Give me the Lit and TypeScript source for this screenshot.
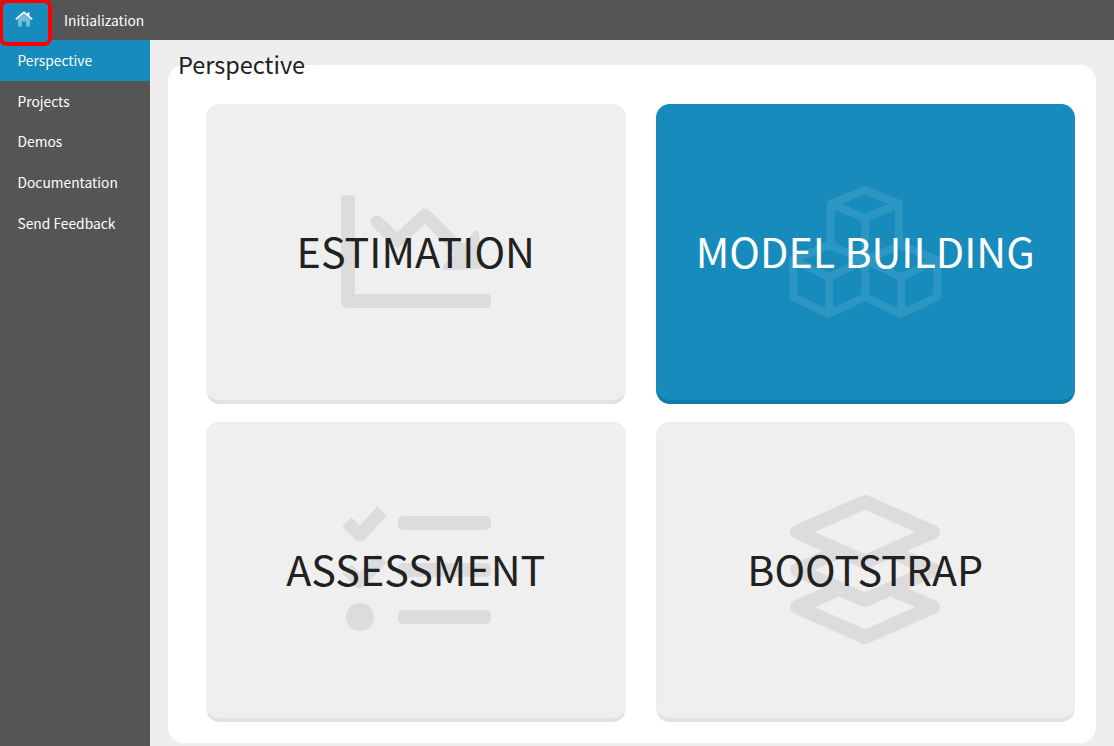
import { LitElement, html, css, svg } from 'lit';
import { customElement, state } from 'lit/decorators.js';

const NAV = ['Perspective', 'Projects', 'Demos', 'Documentation', 'Send Feedback'];

// icon paths use reference page coordinates, cropped by each viewBox
const chartIcon = svg`
  <svg class="art" viewBox="336 174 160 160">
    <path d="M345 195h6a4 4 0 0 1 4 4v95h132a4 4 0 0 1 4 4v6a4 4 0 0 1-4 4H347a6 6 0 0 1-6-6V199a4 4 0 0 1 4-4z" fill="currentColor"/>
    <path d="M377 222l20 19 28-26 40 40" fill="none" stroke="currentColor" stroke-width="13" stroke-linecap="round" stroke-linejoin="round"/>
    <path d="M476 234l3 32-33 1z" fill="currentColor" stroke="currentColor" stroke-width="6" stroke-linejoin="round"/>
  </svg>`;

const cubesIcon = svg`
  <svg class="art" viewBox="786 174 160 160">
    <g fill="none" stroke="currentColor" stroke-width="8" stroke-linejoin="round" stroke-linecap="round">
      <path d="M832 246v-42l34-14 34 14v42M832 204l34 14 34-14M866 218v36"/>
      <path d="M794 260l36-15 36 15 36-15 36 15v37l-36 17-36-17-36 17-36-17zM794 260l36 17 36-17M866 260v37M866 260l36 17 36-17M830 277v37M902 277v37"/>
    </g>
  </svg>`;

const listIcon = svg`
  <svg class="art" viewBox="336 492 160 160">
    <g fill="none" stroke="currentColor" stroke-width="13" stroke-linejoin="round">
      <path d="M347 522l13 13 22-24"/>
      <path d="M347 569l13 13 22-24"/>
    </g>
    <g fill="currentColor">
      <rect x="398" y="516" width="93" height="14" rx="5"/>
      <rect x="398" y="563" width="93" height="14" rx="5"/>
      <rect x="398" y="610" width="93" height="14" rx="5"/>
      <circle cx="360" cy="617" r="14"/>
    </g>
  </svg>`;

const layersIcon = svg`
  <svg class="art" viewBox="786 492 160 160">
    <g fill="none" stroke="currentColor" stroke-width="14" stroke-linejoin="round">
      <path d="M866 502l68 30-68 30-68-30z"/>
      <path d="M841 551l-43 19 68 30 68-30-43-19"/>
      <path d="M840 589l-42 18 68 30 68-30-42-18"/>
    </g>
  </svg>`;

const CARDS = [
  { label: 'ESTIMATION', icon: chartIcon },
  { label: 'MODEL BUILDING', icon: cubesIcon, active: true },
  { label: 'ASSESSMENT', icon: listIcon },
  { label: 'BOOTSTRAP', icon: layersIcon },
];

@customElement('app-root')
export class AppRoot extends LitElement {
  static override styles = css`
    :host {
      display: flex;
      flex-direction: column;
      width: 100%;
      height: 746px;
      overflow: hidden;
      background: #eeeeee;
      color: #212121;
      font-family: "Noto Sans CJK SC", "Noto Sans", sans-serif;
    }

    .topbar {
      display: flex;
      align-items: center;
      flex: none;
      height: 40px;
      background: #555555;
      color: #fff;
      font-size: 13.8px;
    }
    .topbar span { margin-bottom: 1px; }
    .home {
      position: relative;
      z-index: 2;
      display: flex;
      justify-content: center;
      flex: none;
      box-sizing: border-box;
      width: 45px;
      height: 39px;
      margin: 4px 16px 0 3px;
      padding: 8px 3px 0 0;
      border: none;
      border-radius: 4px;
      outline: 4px solid #ff0000;
      background: #168bbc;
    }
    .home svg { width: 18px; height: 16px; }

    .main { display: flex; flex: 1; min-height: 0; }

    .sidebar {
      flex: none;
      width: 150px;
      background: #555555;
      color: #fff;
      font-size: 13.8px;
    }
    .nav-item {
      display: flex;
      align-items: center;
      height: 40.6px;
      padding-left: 17.500px;
    }
    .nav-item.selected { background: #168bbc; }

    .content {
      display: flex;
      flex-direction: column;
      flex: 1;
      min-width: 0;
      padding: 0 18px 3px;
    }
    .title {
      position: relative;
      flex: none;
      height: 25px;
      padding-left: 10px;
      font-size: 23.5px;
      line-height: 48px;
    }
    .panel {
      display: grid;
      grid-template-columns: 1fr 1fr;
      grid-template-rows: 300px 300px;
      gap: 18px 30px;
      flex: 1;
      padding: 39px 21px 21px 38px;
      border-radius: 16px;
      background: #fff;
    }

    .card {
      display: grid;
      place-items: center;
      box-sizing: border-box;
      border-radius: 14px;
      border: 1px solid #ececec;
      border-bottom: 4px solid #e2e2e2;
      background: #efefef;
      color: #212121;
      font-size: 41.3px;
      overflow: hidden;
    }
    .card.active {
      border-color: #168bbc;
      border-bottom-color: #127aa6;
      background: #168bbc;
      color: #fff;
    }
    .art {
      grid-area: 1 / 1;
      width: 160px;
      height: 160px;
      margin-top: 2px;
      color: #dcdcdc;
    }
    .card.active .art { color: #2d97c4; }
    .label { grid-area: 1 / 1; position: relative; margin-bottom: 5px; }
  `;

  @state() private selected = 'Perspective';

  override render() {
    return html`
      <div class="topbar">
        <button class="home" aria-label="Home">
          <svg viewBox="0 0 18 16">
            <path d="M3 8L9 3l6 5v6.500a1 1 0 0 1-1 1h-3v-5H7v5H4a1 1 0 0 1-1-1z" fill="#74bcdb"/>
            <path d="M.3 7.600L9 .3l3.200 2.700V1.400h2.300v3.500l3.200 2.700-1.100 1.300L9 2.600 1.400 8.900z" fill="#fff"/>
          </svg>
        </button>
        <span>Initialization</span>
      </div>
      <div class="main">
        <nav class="sidebar">
          ${NAV.map((n) => html`<div class="nav-item ${n === this.selected ? 'selected' : ''}">${n}</div>`)}
        </nav>
        <div class="content">
          <div class="title">Perspective</div>
          <div class="panel">
            ${CARDS.map((c) => html`
              <div class="card ${c.active ? 'active' : ''}">
                ${c.icon}
                <span class="label">${c.label}</span>
              </div>
            `)}
          </div>
        </div>
      </div>
    `;
  }
}
